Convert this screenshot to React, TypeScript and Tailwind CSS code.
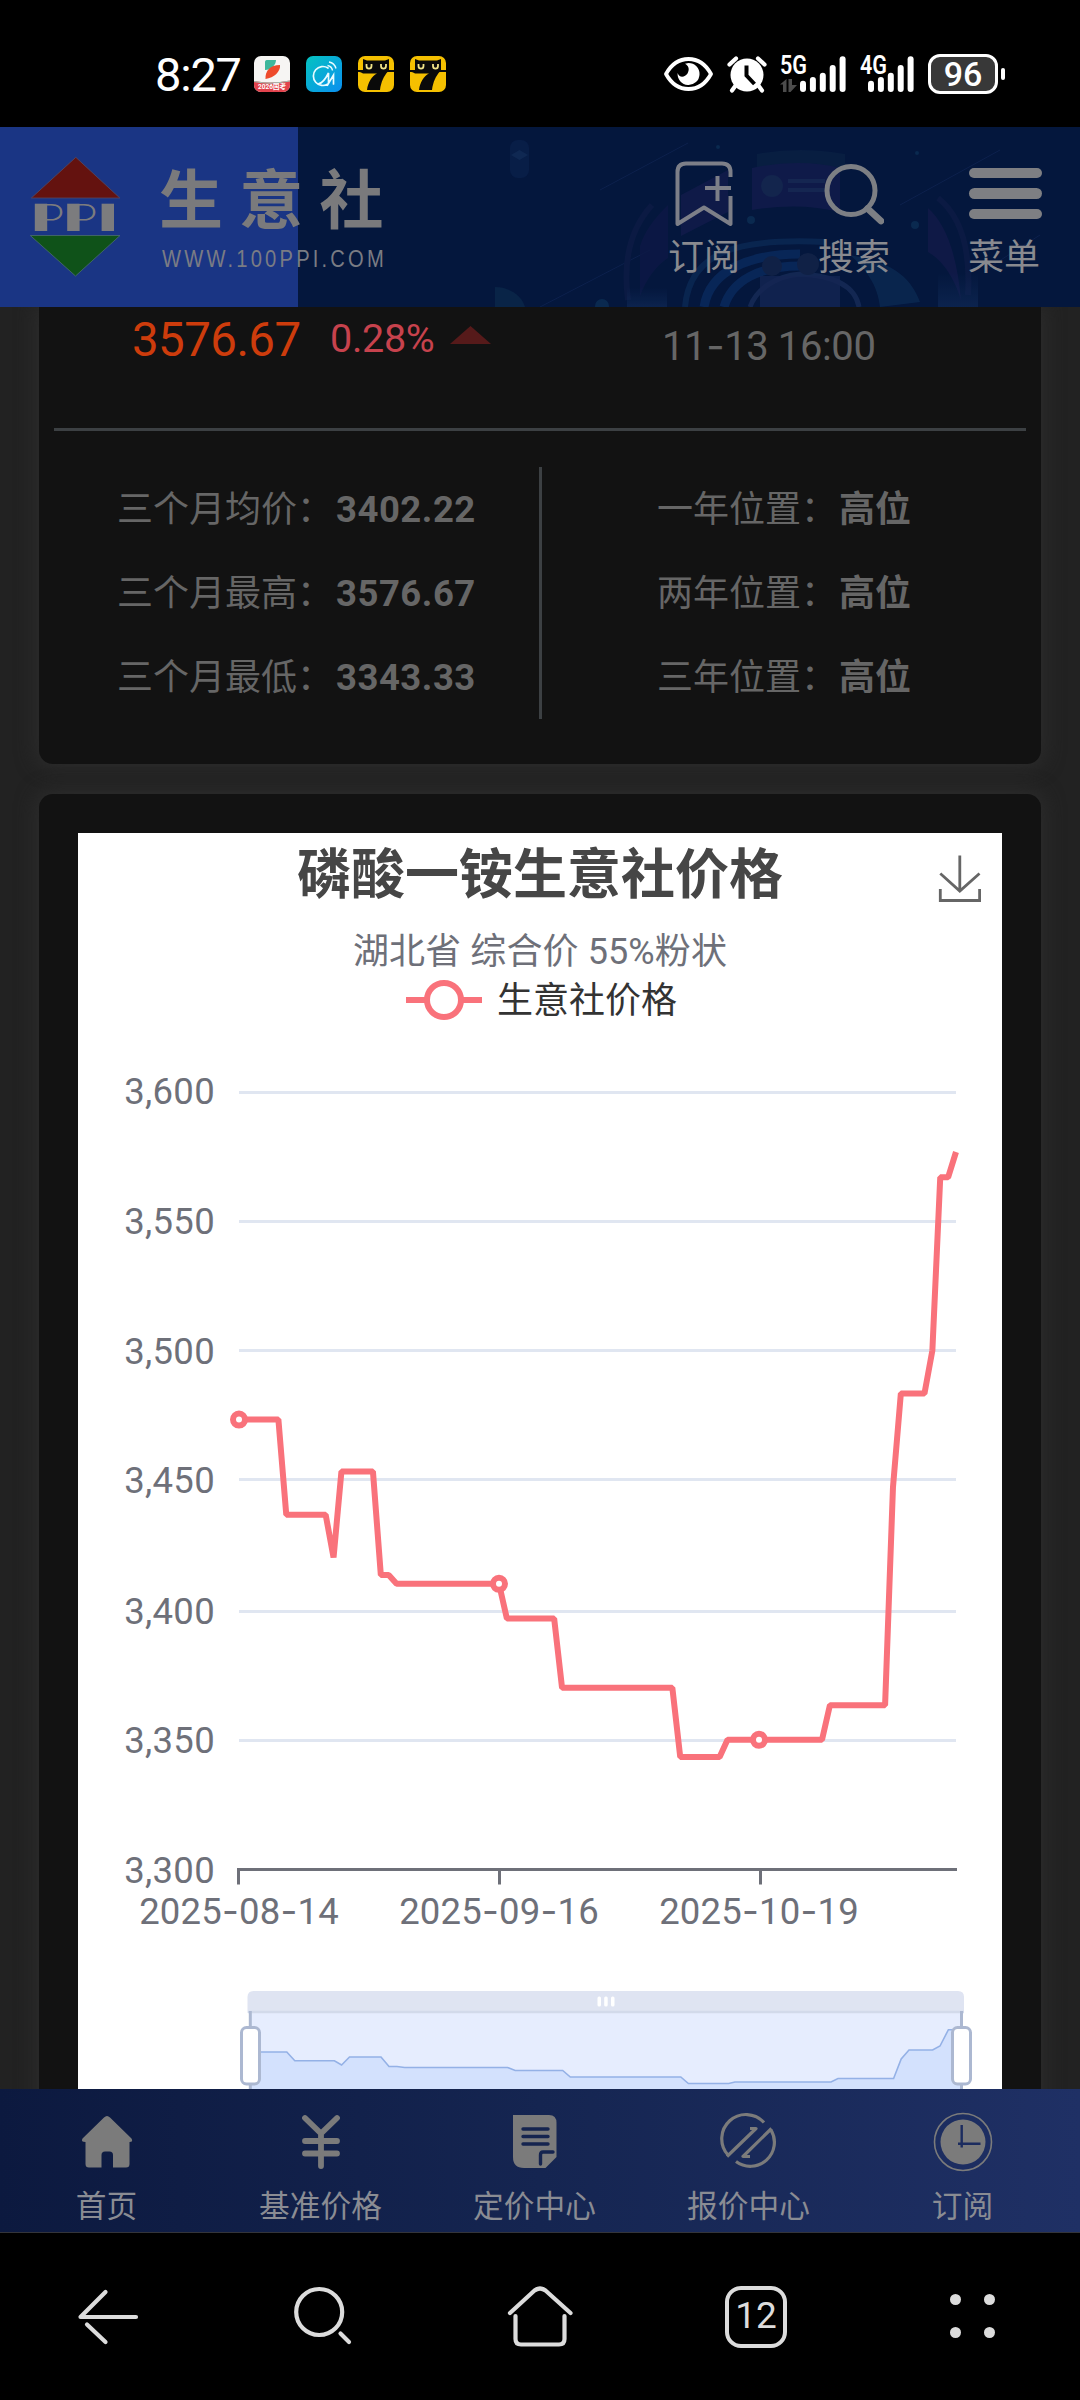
import React from 'react';

const DAY_W = 717 / 91;
const dayX = (d: number) => 239 + d * DAY_W;

// [day offset from 2025-08-14, y on the canvas]
const SERIES: [number, number][] = [
  [0, 1419.6], [5, 1419.6], [6, 1514.7], [11, 1514.7], [12, 1557.5], [13, 1471.4], [17, 1471.4],
  [18, 1575], [19, 1575], [20, 1583.8], [33, 1583.8], [34, 1618.6], [40, 1618.6], [41, 1687.8],
  [55, 1687.8], [56, 1757], [61, 1757], [62, 1739.7], [74, 1739.7], [75, 1705.2], [82, 1705.2],
  [83, 1487.5], [84, 1393.5], [87, 1393.5], [88, 1350.5], [89, 1177.3], [90, 1177.3], [91, 1152],
];

const OVERVIEW =
  '250,2052 286.8,2052 294.8,2060.7 334.4,2060.7 341.6,2065 349.5,2057 381,2057 389,2066.5 397,2066.5 404.6,2067.5 507.6,2067.5 515.2,2070.5 562.7,2070.5 570.3,2077 680.8,2077 688.4,2083.5 728.7,2083.5 735,2082 831,2082 838,2078.5 893.6,2078.5 901.2,2059 909,2050 932.6,2050 940,2046 948.4,2029.7 962,2029.7';

const GRID: [string, number][] = [
  ['3,600', 1092.5], ['3,550', 1221.5], ['3,500', 1350.5], ['3,450', 1479.5], ['3,400', 1611.5], ['3,350', 1740.5],
];

const Y_LABELS: [string, number][] = [
  ['3,600', 1103.3], ['3,550', 1233], ['3,500', 1363], ['3,450', 1492.8], ['3,400', 1623], ['3,350', 1752], ['3,300', 1882],
];

const X_LABELS: [string, number][] = [
  ['2025-08-14', 239], ['2025-09-16', 499], ['2025-10-19', 759],
];

function SignalBars() {
  const tops = [79.7, 76, 71.7, 64, 55.3];
  return (
    <svg width="46" height="36" viewBox="0 55 46 36">
      {tops.map((t, i) => (
        <rect key={t} x={i * 9.9} y={t} width="6" height={91 - t} rx="3" fill="#fff" />
      ))}
    </svg>
  );
}

function CatApp() {
  return (
    <svg className="ml-4" width="36" height="36" viewBox="0 0 36 36">
      <rect width="36" height="36" rx="7" fill="#f5c000" />
      <path d="M5 3 L9 4.500 H27 L31 3 V14 H36 V16 H29.500 C26 20 23 26 22 34 H9 C10 26 14 20 19 17.500 H5 C3 16 2 16 0 16 V14 H5 Z" fill="#0a0a0a" />
      <path d="M8.500 8 V10 C8.500 13.500 13.500 13.500 13.500 10 V8 M23 8 V10 C23 13.500 28 13.500 28 10 V8" fill="none" stroke="#f1e48a" strokeWidth="1.800" />
    </svg>
  );
}

function StatusBar() {
  return (
    <div className="flex h-[127px] shrink-0 items-center bg-black pt-[21px] text-white">
      <div className="ml-[155px] w-[99px] text-[47px] leading-none tracking-[-1.2px]">8:27</div>
      <svg width="36" height="36" viewBox="0 0 36 36">
        <rect width="36" height="36" rx="7" fill="#f6f5f3" />
        <path d="M11 6 C11 4.500 12 4 13.500 4 H22 C22 9 17 14 11 14 Z" fill="#3fb79c" />
        <path d="M11.500 23 C11 15 16 9 26 9 C27 15 20 22 11.500 23 Z" fill="#ee4a2b" />
        <path d="M0 25 C10 27 24 27 36 24.500 V29 A7 7 0 0 1 29 36 H7 A7 7 0 0 1 0 29 Z" fill="#e2434d" />
        <path d="M0 25.500 C10 27.500 24 27.500 36 25" fill="none" stroke="#9fc0b4" strokeWidth="1.200" />
        <text x="18" y="33" textAnchor="middle" fontSize="6.500" fontWeight="700" fill="#fff">2026国考</text>
      </svg>
      <svg className="ml-4" width="36" height="36" viewBox="0 0 36 36">
        <defs>
          <linearGradient id="cm" x1="0" y1="0" x2="1" y2="1">
            <stop offset="0" stopColor="#05c3c0" />
            <stop offset="1" stopColor="#0a8ff0" />
          </linearGradient>
        </defs>
        <rect width="36" height="36" rx="7" fill="url(#cm)" />
        <path d="M22 12 A9.500 9.500 0 1 0 22 28 M13 27.500 C17 27 21 20 22.500 17 V27.500 L27.500 19 V28" fill="none" stroke="#e8fbff" strokeWidth="1.700" strokeLinecap="round" />
        <path d="M21.500 9.500 A6 6 0 0 1 26.500 14.500 M23 6 A9 9 0 0 1 30 12.500" fill="none" stroke="#e8fbff" strokeWidth="1.400" />
      </svg>
      <CatApp />
      <CatApp />
      <svg className="ml-[218px]" width="49" height="34" viewBox="0 0 49 34">
        <path d="M2 17 C13 -3 36 -3 47 17 C36 37 13 37 2 17 Z" fill="none" stroke="#fff" strokeWidth="3.800" strokeLinejoin="round" />
        <path d="M24.500 6 A11 11 0 1 1 13.600 16 C15 21 21 20.500 23.500 16.500 C26 12 24.500 9 21 6.800 Z" fill="#fff" />
      </svg>
      <svg className="ml-[14px]" width="40" height="38" viewBox="0 0 40 38">
        <circle cx="20" cy="20" r="16.500" fill="#fff" />
        <path d="M2.500 9.500 L9 3.500 M37.500 9.500 L31 3.500" stroke="#fff" strokeWidth="4.200" strokeLinecap="round" />
        <path d="M9 30 L5 35.500 M31 30 L35 35.500" stroke="#fff" strokeWidth="4.200" strokeLinecap="round" />
        <path d="M19.500 10.500 V20.500 L27.500 29" fill="none" stroke="#000" strokeWidth="4" />
      </svg>
      <div className="relative ml-[13px] flex w-[66px] items-end">
        <div className="w-[20px]">
          <div className="absolute -top-0.5 left-0 origin-left scale-x-[0.86] text-[25px] leading-[24px] font-semibold">5G</div>
          <svg width="17" height="13" viewBox="0 0 17 13">
            <path d="M0 5.500 L6.500 0 V13 H3 V5.500 Z M8.500 0 H12 V6 H17 L10.500 13 H8.500 Z" fill="#4c4c4c" />
          </svg>
        </div>
        <SignalBars />
      </div>
      <div className="relative ml-[14px] flex w-[54px] items-end">
        <div className="absolute -top-0.5 left-0 z-10 origin-left scale-x-[0.86] text-[25px] leading-[24px] font-semibold">4G</div>
        <div className="ml-[8px]">
          <SignalBars />
        </div>
      </div>
      <div className="ml-[14px] flex h-10 w-[70px] items-center justify-center rounded-[12px] border-[3px] border-white bg-[#383838] text-[34px] leading-none font-medium">
        96
      </div>
      <div className="ml-[3px] h-3 w-[4px] rounded-sm bg-white" />
    </div>
  );
}

function HeaderArt() {
  return (
    <svg className="absolute inset-0 opacity-70" width="1080" height="180" viewBox="0 127 1080 180">
      <defs>
        <linearGradient id="halo" x1="0" y1="0" x2="0" y2="1">
          <stop offset="0" stopColor="#1b3a6e" stopOpacity="0" />
          <stop offset="1" stopColor="#1b3a6e" stopOpacity="0.500" />
        </linearGradient>
      </defs>
      <rect x="510" y="140" width="19" height="38" rx="8" fill="#10295a" opacity="0.550" />
      <path d="M511 155 L519.500 150 L528 155 L519.500 160 Z" fill="#1c3b66" opacity="0.600" />
      <path d="M495 287 C510 287 522 296 525 307 H495 Z" fill="#0c2a4c" />
      <g stroke="#14295a" strokeWidth="1" opacity="0.800">
        <path d="M600 190 L688 143 M540 307 L650 250 M900 205 L1000 150 M985 270 L1040 235" />
      </g>
      <g fill="#0d3157">
        <circle cx="751" cy="220" r="4" />
        <circle cx="915" cy="225" r="4" />
        <circle cx="602" cy="306" r="7" />
        <circle cx="718" cy="147" r="2" />
        <circle cx="917" cy="153" r="2" />
      </g>
      <path d="M757 154 Q800 146 845 154 V170 Q800 160 757 168 Z" fill="#0a2144" />
      <path d="M752 168 Q800 158 840 168 V212 Q800 202 752 210 Z" fill="#151c4f" />
      <circle cx="772" cy="186" r="11" fill="#1a2b55" />
      <path d="M788 181 H825 M788 190 H825" stroke="#1d2d5a" strokeWidth="4" />
      <path d="M681 195 L728 170 V212 L681 236 Z" fill="#141c4e" />
      <path d="M640 296 V246 Q646 226 668 205 V258 Q650 270 640 296 Z" fill="#12194a" opacity="0.800" />
      <path d="M628 300 Q620 240 652 205" fill="none" stroke="#0e1c46" strokeWidth="6" />
      <path d="M928 208 Q955 232 961 300 Q950 265 928 252 Z" fill="#141a4b" />
      <path d="M938 198 Q972 225 968 295" fill="none" stroke="#0e1c46" strokeWidth="6" />
      <g fill="none">
        <path d="M685 307 C690 250 740 238 825 242" stroke="#0c2b58" strokeWidth="6" />
        <path d="M704 307 C710 270 750 254 800 254" stroke="#0b2d62" strokeWidth="9" />
        <path d="M724 307 C732 280 760 266 800 266" stroke="#0b2d62" strokeWidth="9" />
        <path d="M750 307 C756 290 775 276 800 274 C840 276 856 290 859 307" stroke="#1a2f5c" strokeWidth="5" />
      </g>
      <path d="M850 255 C890 262 910 275 920 302 L880 307 C878 285 865 268 850 255 Z" fill="#0c2c55" />
      <rect x="760" y="276" width="80" height="31" fill="#1c2c5c" opacity="0.800" />
      <circle cx="772" cy="266" r="10" fill="#16264a" />
      <circle cx="808" cy="264" r="11" fill="#16264a" />
      <rect x="627" y="287" width="40" height="20" fill="url(#halo)" />
      <rect x="938" y="272" width="40" height="35" fill="url(#halo)" />
    </svg>
  );
}

function HeaderAction({ label, children, className }: { label: string; children: React.ReactNode; className: string }) {
  return (
    <div className={'flex w-[74px] flex-col items-center ' + className}>
      <div className="flex h-[66px] items-center justify-center">{children}</div>
      <div className="mt-[13px] text-[36px] leading-[36px] whitespace-nowrap text-[#898a8f]">{label}</div>
    </div>
  );
}

function Header() {
  return (
    <header className="relative flex h-[180px] shrink-0 bg-[linear-gradient(90deg,#1a3584_298px,#04173d_298px)]">
      <HeaderArt />
      <svg className="relative" width="400" height="180" viewBox="0 127 400 180">
        <path d="M75.800 157.300 L119.800 198 H31.300 Z" fill="#64120f" stroke="#554a62" strokeWidth="0.800" />
        <path d="M30.300 235.500 H120 L75.500 276 Z" fill="#0f5219" stroke="#4a6d6d" strokeWidth="0.800" />
        <g fill="#7c7c7e" fontFamily="Lato, sans-serif" fontWeight="300" fontSize="38">
          <text x="38" y="231" textLength="26" lengthAdjust="spacingAndGlyphs">P</text>
          <text x="71" y="231" textLength="26" lengthAdjust="spacingAndGlyphs">P</text>
          <text x="103" y="231">I</text>
        </g>
        <g fill="#7c7c7e">
          <rect x="34.800" y="203.700" width="12.400" height="27.300" />
          <rect x="67.200" y="203.700" width="12.400" height="27.300" />
          <rect x="101.600" y="203.700" width="12.400" height="27.300" />
        </g>
        <text x="159" y="222.500" fontSize="64" fontWeight="700" letterSpacing="16.300" fill="#7a7a7c">生意社</text>
        <g transform="translate(162 266.500) scale(0.84 1)">
          <text fontSize="24" fontFamily="Liberation Sans, sans-serif" textLength="264" fill="#7a7c84">WWW.100PPI.COM</text>
        </g>
      </svg>
      <HeaderAction label="订阅" className="relative mt-[34px] ml-[267px]">
        <svg width="60" height="68" viewBox="0 0 60 68" fill="none" stroke="#7d7f88" strokeWidth="4">
          <path d="M56.500 17 V12 Q56.500 3.500 48 3.500 H12 Q3.500 3.500 3.500 12 V64 L30 47.500 L56.500 64 V36" strokeLinejoin="round" />
          <path d="M31 28 H57 M43.500 16 V41" strokeWidth="4" />
        </svg>
      </HeaderAction>
      <HeaderAction label="搜索" className="relative mt-[34px] ml-[76px]">
        <svg width="60" height="64" viewBox="0 0 60 64" fill="none" stroke="#7d7f84">
          <circle cx="27" cy="28.500" r="24" strokeWidth="5" />
          <path d="M43.500 46.500 L57 59" strokeWidth="6.500" strokeLinecap="round" />
        </svg>
      </HeaderAction>
      <HeaderAction label="菜单" className="relative mt-[34px] ml-[76px]">
        <div className="mt-[-1px] ml-[3px] flex w-[73px] shrink-0 flex-col gap-[10px]">
          <div className="h-[10.500px] rounded-full bg-[#7e7f83]" />
          <div className="h-[10.500px] rounded-full bg-[#7e7f83]" />
          <div className="h-[10.500px] rounded-full bg-[#7e7f83]" />
        </div>
      </HeaderAction>
    </header>
  );
}

function Stat({ label, value, strong }: { label: string; value: string; strong?: boolean }) {
  return (
    <div className="flex h-[84px] items-center whitespace-nowrap">
      <span>{label}：</span>
      <span className={strong ? 'ml-[2px] font-bold' : 'ml-[3px] text-[36.500px] font-bold tracking-[0.500px]'}>{value}</span>
    </div>
  );
}

function QuoteCard() {
  return (
    <section className="mx-[39px] h-[457px] shrink-0 rounded-b-[14px] bg-[#121212] px-[15px] text-[36px] leading-[40px] text-[#666] shadow-[0_0_20px_3px_#2d2d2d]">
      <div className="flex h-[121px]">
        <div className="mt-[9px] ml-[78px] w-[198px] text-[47.500px] leading-[48px] tracking-[-0.600px] text-[#cd3c0c]">3576.67</div>
        <div className="mt-[12px] w-[120px] text-[39.500px] leading-[40px] tracking-[-0.300px] text-[#c7424d]">0.28%</div>
        <svg className="mt-[19px]" width="41" height="18" viewBox="0 0 41 18">
          <path d="M20.500 0 L41 18 H0 Z" fill="#561a1a" />
        </svg>
        <div className="mt-[19px] ml-[171px] text-[40px] leading-[40px] tracking-[-0.400px]">
          11<span className="font-['Inter']">-</span>13 16:00
        </div>
      </div>
      <div className="h-[3px] bg-[#3c4043]" />
      <div className="mt-[36px] flex h-[252px]">
        <div className="w-[485px] pt-px pl-[63px]">
          <Stat label="三个月均价" value="3402.22" />
          <Stat label="三个月最高" value="3576.67" />
          <Stat label="三个月最低" value="3343.33" />
        </div>
        <div className="w-[3px] bg-[#3c4043]" />
        <div className="pt-px pl-[115px]">
          <Stat label="一年位置" value="高位" strong />
          <Stat label="两年位置" value="高位" strong />
          <Stat label="三年位置" value="高位" strong />
        </div>
      </div>
    </section>
  );
}

function AxisDate({ text, x }: { text: string; x: number }) {
  const [y, m, d] = text.split('-');
  return (
    <text x={x} y="1924" textAnchor="middle" letterSpacing="0.200">
      {y}
      <tspan fontFamily="Inter">-</tspan>
      {m}
      <tspan fontFamily="Inter">-</tspan>
      {d}
    </text>
  );
}

function PriceChart() {
  return (
    <svg className="block" width="924" height="1066" viewBox="78 1023 924 1066">
      {GRID.map(([k, y]) => (
        <path key={k} d={`M239 ${y} H956`} stroke="#e0e6f1" strokeWidth="3" />
      ))}
      <path d="M237.500 1869.500 H957" stroke="#6e7079" strokeWidth="3" />
      <path d="M238.500 1868 V1884.500 M499.500 1868 V1884.500 M760.500 1868 V1884.500" stroke="#6e7079" strokeWidth="3" />
      <g fill="#6e7079" fontSize="36.500">
        {Y_LABELS.map(([t, y]) => (
          <text key={t} x="215" y={y + 0.5} textAnchor="end" letterSpacing="0.300">{t}</text>
        ))}
        {X_LABELS.map(([t, x]) => (
          <AxisDate key={t} text={t} x={x} />
        ))}
      </g>
      <polyline points={SERIES.map(([d, y]) => `${dayX(d)},${y}`).join(' ')} fill="none" stroke="#f9727b" strokeWidth="6" strokeLinejoin="bevel" />
      {[[239, 1419.6], [499, 1583.8], [759, 1739.8]].map(([x, y]) => (
        <circle key={x} cx={x} cy={y} r="6" fill="#fff" stroke="#f9727b" strokeWidth="6" />
      ))}

      <path d="M247.500 2013 V1997 Q247.500 1991 253.500 1991 H958 Q964 1991 964 1997 V2013 Z" fill="#dfe4f2" />
      <rect x="249" y="2012" width="714" height="100" fill="#e6edfe" />
      <path d="M248 2012 H964" stroke="#d2daea" strokeWidth="2.500" />
      <polygon points={`250,2100 ${OVERVIEW} 962,2100`} fill="#d3e1fd" />
      <polyline points={OVERVIEW} fill="none" stroke="#94b1e6" strokeWidth="1.600" />
      <path d="M250.300 2011 V2089 M961.500 2011 V2089" stroke="#acb8d1" strokeWidth="3" />
      <rect x="241.500" y="2027.500" width="18" height="56.500" rx="5" fill="#fff" stroke="#acb8d1" strokeWidth="3" />
      <rect x="952.500" y="2027.500" width="18" height="56.500" rx="5" fill="#fff" stroke="#acb8d1" strokeWidth="3" />
      <g fill="#fff">
        <rect x="597.500" y="1996.500" width="3.500" height="10" rx="1.500" />
        <rect x="604.200" y="1996.500" width="3.500" height="10" rx="1.500" />
        <rect x="611" y="1996.500" width="3.500" height="10" rx="1.500" />
      </g>
    </svg>
  );
}

function ChartCard() {
  return (
    <section className="mx-[39px] mt-[30px] h-[1400px] shrink-0 rounded-t-[14px] bg-[#121212] px-[39px] pt-[39px] shadow-[0_0_20px_3px_#2d2d2d]">
      <div className="relative h-[1256px] bg-white">
        <h1 className="flex h-[86px] items-center justify-center text-[54px] leading-[60px] font-bold text-[#464646]">磷酸一铵生意社价格</h1>
        <div className="mt-[7px] flex h-[51px] items-center justify-center text-[36px] leading-[40px] tracking-[0.100px] text-[#6e7079]">湖北省 综合价 55%粉状</div>
        <div className="flex h-[46px] items-center justify-center pl-[3px] text-[36px] leading-[40px] text-[#333]">
          <svg className="mr-[15px]" width="76" height="42" viewBox="0 0 76 42">
            <path d="M0 21 H76" stroke="#f9727b" strokeWidth="6" />
            <circle cx="38" cy="21" r="17" fill="#fff" stroke="#f9727b" strokeWidth="6" />
          </svg>
          <span className="pt-px">生意社价格</span>
        </div>
        <svg className="absolute top-[21px] right-[20px]" width="44" height="50" viewBox="938 854 44 50" fill="none" stroke="#666" strokeWidth="2.800">
          <path d="M959.800 855.500 V890 M940.300 873.500 L959.800 891 L979.500 873.500" />
          <path d="M940.300 889 V900.500 H979.600 V889" />
        </svg>
        <PriceChart />
      </div>
    </section>
  );
}

function Tab({ label, children }: { label: string; children: React.ReactNode }) {
  return (
    <div className="flex w-[214px] flex-col items-center">
      <svg className="mt-[23px]" width="60" height="60" viewBox="0 0 60 60">{children}</svg>
      <div className="mt-[20px] -ml-px text-[30.700px] leading-[30px] text-[#8a8c93]">{label}</div>
    </div>
  );
}

function TabBar() {
  const g = '#7b7b7b';
  const bg = '#15244f';
  return (
    <nav className="relative flex h-[143px] shrink-0 bg-[linear-gradient(90deg,#0c193f,#152551_50%,#1f3065)]">
      <Tab label="首页">
        <path d="M30 4 Q31.500 4 33 5.500 L54.500 26.500 Q56.500 30 52.500 30 V52 Q52.500 55.500 49 55.500 H36 V43 Q36 39.500 32.500 39.500 H28 Q24.500 39.500 24.500 43 V55.500 H12 Q8.500 55.500 8.500 52 V30 Q3.500 30 5.500 26.500 L27 5.500 Q28.500 4 30 4 Z" fill={g} />
      </Tab>
      <Tab label="基准价格">
        <path d="M14 6 L30 21.500 L46 6 M30 21.500 V54 M14 29 H46 M14 41.500 H46" fill="none" stroke={g} strokeWidth="5.800" strokeLinecap="round" strokeLinejoin="round" />
      </Tab>
      <Tab label="定价中心">
        <path d="M8 3 H44 Q51.500 3 51.500 11 V45 L40.500 56 H19 Q8 56 8 45 Z" fill={g} />
        <path d="M18 17 H43 M18 24.500 H43 M18 32 H43" stroke={bg} strokeWidth="3.400" strokeLinecap="round" />
        <path d="M48 40 H38 Q35.500 40 35.500 43 V52" fill="none" stroke={bg} strokeWidth="3.400" strokeLinecap="round" />
      </Tab>
      <Tab label="报价中心">
        <g fill="none" stroke={g} strokeWidth="3.200" strokeLinejoin="round">
          <path d="M45 10.500 A24 24 0 0 0 9 43 M17 49.500 A24 24 0 0 0 52 18" />
          <path d="M8 44.500 L37 16.500 H31 M52.500 16.500 L24 44.500 H31" />
        </g>
      </Tab>
      <Tab label="订阅">
        <circle cx="30" cy="30" r="28.500" fill="none" stroke={g} strokeWidth="1.600" />
        <circle cx="30" cy="30" r="22.500" fill={g} />
        <path d="M28.700 13 V35.500 M25 31.700 H47.500" stroke="#1c2c5f" strokeWidth="2.400" />
      </Tab>
    </nav>
  );
}

function BrowserBar() {
  return (
    <nav className="flex flex-1 items-center border-t border-[#33343a] bg-black pt-px text-[#dcdcdc]">
      <svg className="ml-[74px]" width="68" height="68" viewBox="74 2283 68 68" fill="none" stroke="currentColor" strokeWidth="4.200" strokeLinecap="round">
        <path d="M136 2317 H80.500 L105.500 2292 M87 2324.500 L105.500 2342" strokeLinejoin="round" />
      </svg>
      <svg className="ml-[146px]" width="68" height="68" viewBox="288 2283 68 68" fill="none" stroke="currentColor" strokeWidth="4.200">
        <circle cx="319.200" cy="2312" r="23" />
        <path d="M340.500 2333.500 L349 2342" strokeLinecap="round" />
      </svg>
      <svg className="ml-[150px]" width="68" height="68" viewBox="506 2283 68 68" fill="none" stroke="currentColor" strokeWidth="4.200" strokeLinecap="round" strokeLinejoin="round">
        <path d="M510 2313 L534.500 2290.500 Q540 2286.500 545.500 2290.500 L570.500 2313" />
        <path d="M515.500 2316 V2339 Q515.500 2344.500 521 2344.500 H559 Q564.500 2344.500 564.500 2339 V2316" />
      </svg>
      <div className="ml-[151px] flex h-[62px] w-[62px] items-center justify-center rounded-[16px] border-[4.500px] border-current text-[37px] leading-none">
        <span className="-mt-1">12</span>
      </div>
      <div className="mt-[-3px] ml-[163px] grid grid-cols-2 gap-x-[23px] gap-y-[22px]">
        <i className="h-[11px] w-[11px] rounded-full bg-current" />
        <i className="h-[11px] w-[11px] rounded-full bg-current" />
        <i className="h-[11px] w-[11px] rounded-full bg-current" />
        <i className="h-[11px] w-[11px] rounded-full bg-current" />
      </div>
    </nav>
  );
}

export default function App() {
  return (
    <div className="flex h-[2400px] w-[1080px] flex-col overflow-hidden bg-[#222] font-['Roboto','Noto_Sans_CJK_SC',sans-serif]">
      <StatusBar />
      <Header />
      <main className="flex h-[1782px] shrink-0 flex-col overflow-hidden">
        <QuoteCard />
        <ChartCard />
      </main>
      <TabBar />
      <BrowserBar />
    </div>
  );
}
